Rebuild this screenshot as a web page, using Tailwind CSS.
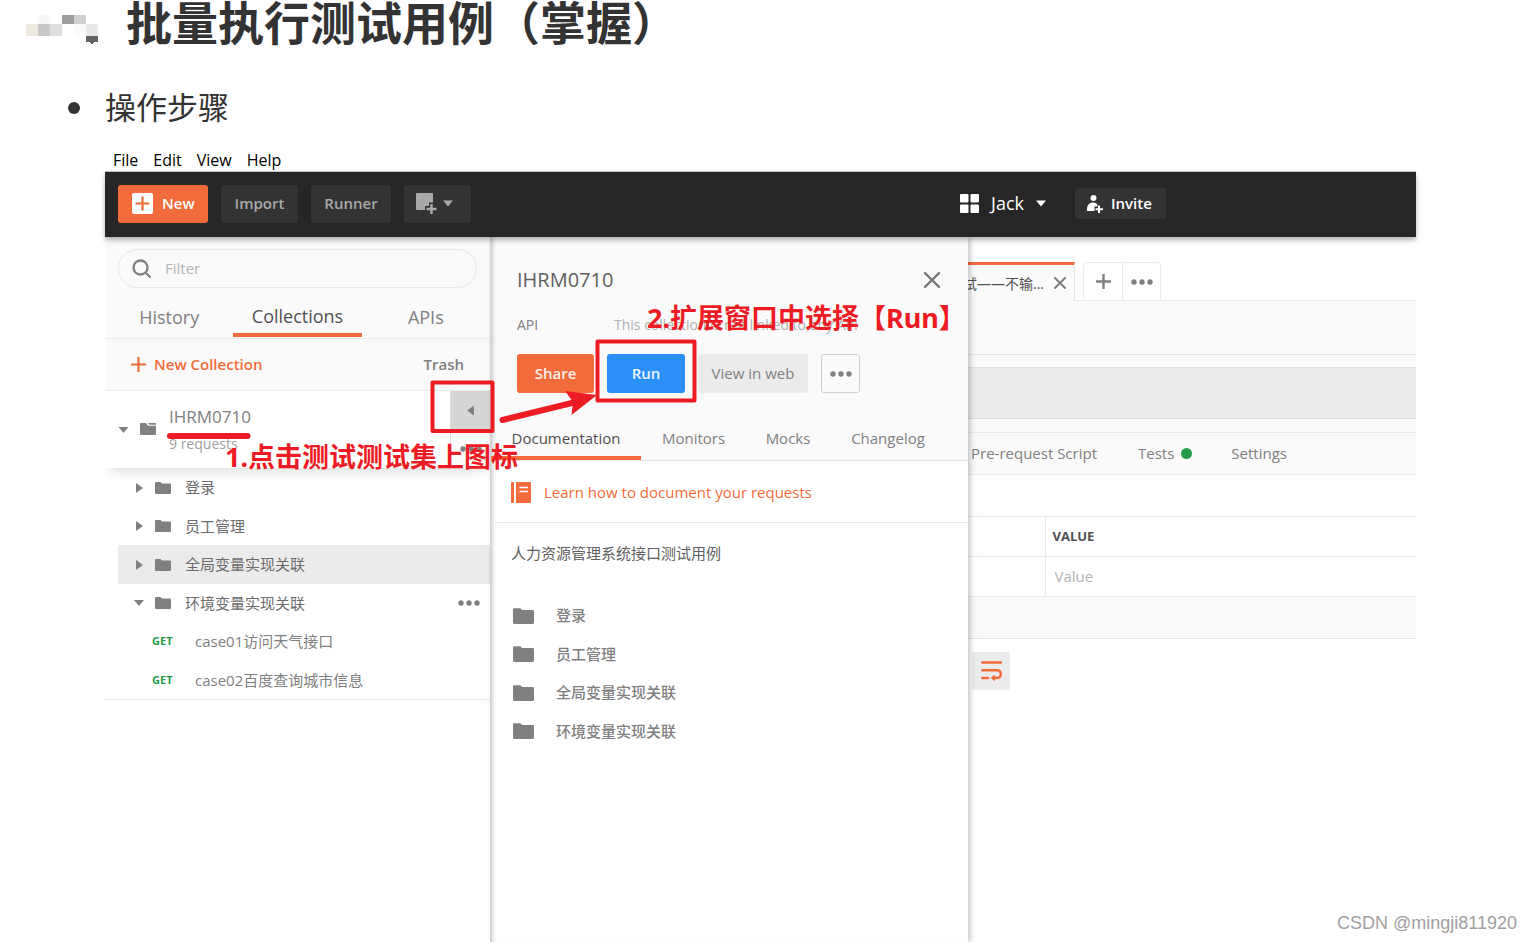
<!DOCTYPE html>
<html lang="zh-CN">
<head>
<meta charset="utf-8">
<title>批量执行测试用例（掌握）</title>
<script src="https://cdn.jsdelivr.net/npm/@tailwindcss/browser@4"></script>
</head>
<body class="bg-white font-['Open_Sans','Noto_Sans_CJK_SC',sans-serif] text-[15px] text-[#808080]">
<svg class="hidden">
  <symbol id="folder" viewBox="0 0 16 12"><path d="M0 1Q0 0 1 0H5.500L7 1.500H15Q16 1.500 16 2.500V11Q16 12 15 12H1Q0 12 0 11Z" fill="#808080"/></symbol>
  <symbol id="right" viewBox="0 0 7 10"><path d="M0 0L7 5L0 10Z" fill="#808080"/></symbol>
  <symbol id="down" viewBox="0 0 10 6"><path d="M0 0H10L5 6Z" fill="currentColor"/></symbol>
  <symbol id="dots" viewBox="0 0 22 6"><g fill="#808080"><circle cx="3" cy="3" r="2.700"/><circle cx="11" cy="3" r="2.700"/><circle cx="19" cy="3" r="2.700"/></g></symbol>
</svg>
<div class="relative flex h-screen flex-col overflow-hidden">
  <header class="flex h-12 shrink-0 items-start pl-[26px]">
    <svg class="h-12 w-[100px] shrink-0" viewBox="26 0 100 48" shape-rendering="crispEdges">
      <rect x="38" y="15" width="12" height="9" fill="#f8f8f8"/><rect x="62" y="15" width="12" height="9" fill="#9d9d9d"/><rect x="74" y="15" width="12" height="9" fill="#d0d0d2"/>
      <rect x="26" y="24" width="12" height="12" fill="#ede8e0"/><rect x="38" y="24" width="12" height="12" fill="#c8c8ca"/><rect x="50" y="24" width="12" height="12" fill="#dfdfdf"/><rect x="74" y="24" width="12" height="12" fill="#fafafa"/><rect x="86" y="24" width="12" height="12" fill="#e8e9eb"/>
      <path d="M86 36H98V42H94L92 45L89 42H86Z" fill="#646567"/>
    </svg>
    <h1 class="font-['Noto_Sans_CJK_SC',sans-serif] text-[46px] leading-10 font-bold whitespace-nowrap text-[#333]">批量执行测试用例（掌握）</h1>
  </header>
  <ul class="mt-10 shrink-0">
    <li class="flex h-10 items-center gap-[25px] pl-[68px] font-['Noto_Sans_CJK_SC',sans-serif] text-[31px] leading-9 text-[#333]"><span class="size-3 rounded-full bg-[#333]"></span><span class="self-start">操作步骤</span></li>
  </ul>

  <section class="relative mt-5 mr-[115px] ml-[105px] flex min-h-0 flex-1 flex-col">
    <nav class="flex h-6 shrink-0 items-center gap-[15px] border-b border-[#c4c8c8] pl-2 text-[16px] text-black">
      <button>File</button><button>Edit</button><button>View</button><button>Help</button>
    </nav>

    <div class="relative z-20 flex h-[65px] shrink-0 items-center justify-between bg-[#262626] pb-0.5 pl-[13px] font-semibold shadow-[0_3px_5px_rgba(0,0,0,0.3)]">
      <div class="flex gap-[13px]">
        <button class="flex h-[38px] w-[90px] items-center gap-[9px] rounded-[3px] bg-[#f26b3a] pl-[14px] text-white">
          <svg class="size-[21px]" viewBox="0 0 21 21"><rect width="21" height="21" rx="2" fill="#fff"/><path d="M10.500 3.500V17.500M3.500 10.500H17.500" stroke="#f26b3a" stroke-width="2.200"/></svg>New</button>
        <button class="h-[38px] w-[77px] rounded-[3px] bg-[#333] text-[#a9a9a9]">Import</button>
        <button class="h-[38px] w-20 rounded-[3px] bg-[#333] text-[#a9a9a9]">Runner</button>
        <button class="flex h-[38px] w-[67px] items-center gap-[6px] rounded-[3px] bg-[#333] pl-3 text-[#a9a9a9]" aria-label="New window">
          <svg class="size-[21px]" viewBox="0 0 21 21"><path d="M1 0H16Q17 0 17 1V9.500H13V13H9V17H1Q0 17 0 16V1Q0 0 1 0Z" fill="#a9a9a9"/><path d="M15.500 11V21M10.500 16H20.500" stroke="#a9a9a9" stroke-width="2.400"/></svg>
          <svg class="h-[7px] w-[10px]"><use href="#down"/></svg></button>
      </div>
      <div class="mr-[250px] flex items-center">
        <svg class="mr-3 size-[19px]" viewBox="0 0 19 19" fill="#fff"><rect width="8.500" height="8.500" rx="1"/><rect x="10.500" width="8.500" height="8.500" rx="1"/><rect y="10.500" width="8.500" height="8.500" rx="1"/><rect x="10.500" y="10.500" width="8.500" height="8.500" rx="1"/></svg>
        <button class="flex items-center gap-3 text-[18px] font-normal text-white">Jack<svg class="h-[7px] w-[10px]"><use href="#down"/></svg></button>
        <button class="ml-[29px] flex h-[31px] w-[91px] items-center gap-[7px] rounded-[3px] bg-[#333] pl-3 text-white">
          <svg class="h-[18px] w-[17px] shrink-0" viewBox="0 0 17 18"><circle cx="6.500" cy="3" r="3" fill="#fff"/><path d="M0 16V13Q1 7.500 6 7.500Q9.500 7.500 10.500 10V11.500H7.500V16Z" fill="#fff"/><path d="M12 10.500V18M8.500 14.200H16" stroke="#fff" stroke-width="2"/></svg>Invite</button>
      </div>
    </div>

    <div class="flex min-h-0 flex-1">
      <aside class="w-[386px] shrink-0 overflow-hidden border-r border-[#ddd] bg-white">
        <div class="bg-[#fafafa] pt-3">
          <label class="mx-[13px] flex h-[39px] items-center gap-[13px] rounded-full border border-[#e8e8e8] pl-[13px]">
            <svg class="size-5 shrink-0" viewBox="0 0 20 20" fill="none" stroke="#808080" stroke-width="2.300"><circle cx="8.500" cy="8.500" r="7"/><path d="M13.500 13.500L18.500 18.500"/></svg>
            <input type="text" placeholder="Filter" aria-label="Filter" class="w-full min-w-0 outline-none placeholder:text-[#b4b4b4]">
          </label>
          <div class="grid h-[51px] grid-cols-3 border-b border-[#eaeaea] text-[18px]">
            <button class="pt-2">History</button>
            <button class="mb-px border-b-4 border-[#f26b3a] pt-3 text-[#505050]">Collections</button>
            <button class="pt-2">APIs</button>
          </div>
          <div class="flex h-[52px] items-center justify-between border-b border-[#eaeaea] pr-[26px] pl-[26px] font-semibold">
            <button class="flex items-center gap-2 text-[#f26b3a]"><svg class="size-[15px]" viewBox="0 0 15 15"><path d="M7.500 0V15M0 7.500H15" stroke="#f26b3a" stroke-width="2.200"/></svg>New Collection</button>
            <button>Trash</button>
          </div>
        </div>
        <div class="relative flex h-[77px] shadow-[0_6px_12px_-4px_rgba(0,0,0,0.16)]">
          <svg class="mt-[36px] ml-[13px] h-[6px] w-[11px]"><use href="#down"/></svg>
          <svg class="mt-8 ml-[11px] h-3 w-4" viewBox="0 0 16 12"><path d="M0 1Q0 0 1 0H6L8 2.800H16V11Q16 12 15 12H1Q0 12 0 11Z" fill="#808080"/><path d="M8 0H15Q16 0 16 1V1.800H9.300Z" fill="#808080"/></svg>
          <div class="ml-[13px] pt-[14px]"><div class="text-[17px] leading-6">IHRM0710</div><div class="pt-1 text-[14px] leading-[22px] text-[#a0a0a0]">9 requests</div></div>
          <div class="ml-auto flex w-10 flex-col border-l border-[#ddd]">
            <button class="flex h-[38px] items-center justify-center bg-[#d6d6d6]" aria-label="Collapse"><svg class="h-[11px] w-[7px] rotate-180"><use href="#right"/></svg></button>
            <button class="flex h-[39px] items-center justify-center bg-[#fafafa]" aria-label="More"><svg class="h-[6px] w-[22px]"><use href="#dots"/></svg></button>
          </div>
        </div>
        <ul class="border-b border-[#eaeaea] text-[#6b6b6b]">
          <li class="flex h-[39px] items-center pl-[31px]"><svg class="h-[10px] w-[7px]"><use href="#right"/></svg><svg class="ml-3 h-3 w-4"><use href="#folder"/></svg><span class="ml-[14px]">登录</span></li>
          <li class="flex h-[38px] items-center pl-[31px]"><svg class="h-[10px] w-[7px]"><use href="#right"/></svg><svg class="ml-3 h-3 w-4"><use href="#folder"/></svg><span class="ml-[14px]">员工管理</span></li>
          <li class="ml-[13px] flex h-[39px] items-center bg-[#ebebeb] pl-[18px]"><svg class="h-[10px] w-[7px]"><use href="#right"/></svg><svg class="ml-3 h-3 w-4"><use href="#folder"/></svg><span class="ml-[14px]">全局变量实现关联</span></li>
          <li class="flex h-[38px] items-center pr-[10px] pl-[29px]"><svg class="h-[6px] w-[10px] text-[#808080]"><use href="#down"/></svg><svg class="ml-[11px] h-3 w-4"><use href="#folder"/></svg><span class="ml-[14px]">环境变量实现关联</span><button class="ml-auto" aria-label="More"><svg class="h-[6px] w-[22px]"><use href="#dots"/></svg></button></li>
          <li class="flex h-[39px] items-center pl-[47px] text-[#808080]"><b class="w-[43px] text-[11px] text-[#259b4a]">GET</b>case01访问天气接口</li>
          <li class="flex h-[38px] items-center pl-[47px] text-[#808080]"><b class="w-[43px] text-[11px] text-[#259b4a]">GET</b>case02百度查询城市信息</li>
        </ul>
      </aside>

      <article class="relative z-10 w-[477px] shrink-0 bg-white shadow-[2px_0_6px_rgba(0,0,0,0.25),inset_5px_0_5px_-4px_rgba(0,0,0,0.25)]">
        <div class="h-[224px] border-b border-[#e4e4e4] bg-[#fafafa] pt-[26px] shadow-[inset_5px_0_5px_-4px_rgba(0,0,0,0.25)]">
          <div class="flex h-[34px] items-center justify-between pr-7 pl-[26px]"><h2 class="text-[20px] text-[#606060]">IHRM0710</h2>
            <button aria-label="Close"><svg class="size-4" viewBox="0 0 16 16"><path d="M1 1L15 15M15 1L1 15" stroke="#757575" stroke-width="2.400" stroke-linecap="round"/></svg></button></div>
          <div class="flex h-[57px] items-center pb-0.5 pl-[26px] text-[14px]"><span class="w-[97px]">API</span><span class="text-[#b0b0b0]">This collection is not linked to any API</span></div>
          <div class="flex gap-[13px] pl-[26px]">
            <button class="h-[39px] w-[77px] rounded-[3px] bg-[#f26b3a] font-semibold text-white/90">Share</button>
            <button class="h-[39px] w-[78px] rounded-[3px] bg-[#2a8ff7] font-semibold text-white/90">Run</button>
            <button class="h-[39px] w-[110px] rounded-[3px] bg-[#ebebeb]">View in web</button>
            <button class="flex h-[39px] w-[39px] items-center justify-center rounded-[3px] border border-[#cfcfcf]" aria-label="More"><svg class="h-[6px] w-[22px]"><use href="#dots"/></svg></button>
          </div>
          <div class="flex h-[67px] items-end">
            <button class="h-10 w-[150px] border-b-4 border-[#f26b3a] text-[#505050]">Documentation</button>
            <button class="h-10 w-[105px] pb-1">Monitors</button>
            <button class="h-10 w-[84px] pb-1">Mocks</button>
            <button class="h-10 w-[116px] pb-1">Changelog</button>
          </div>
        </div>
        <a href="#" class="flex h-[62px] items-center gap-[13px] border-b border-[#e8e8e8] pt-0.5 pl-5 text-[#f26b3a]"><svg class="h-[21px] w-5" viewBox="0 0 20 21" fill="#f26b3a"><rect width="3" height="21" rx="1"/><path d="M5 0H19Q20 0 20 1V20Q20 21 19 21H5Z"/><path d="M8.500 5.500H17M8.500 9.500H17" stroke="#fff" stroke-width="1.300"/></svg>Learn how to document your requests</a>
        <p class="flex h-[60px] items-center pl-5 text-[#606060]">人力资源管理系统接口测试用例</p>
        <ul class="pt-[13px] font-medium">
          <li class="flex h-[39px] items-center gap-[22px] pl-[22px]"><svg class="h-4 w-[21px]"><use href="#folder"/></svg>登录</li>
          <li class="flex h-[38px] items-center gap-[22px] pl-[22px]"><svg class="h-4 w-[21px]"><use href="#folder"/></svg>员工管理</li>
          <li class="flex h-[39px] items-center gap-[22px] pl-[22px]"><svg class="h-4 w-[21px]"><use href="#folder"/></svg>全局变量实现关联</li>
          <li class="flex h-[38px] items-center gap-[22px] pl-[22px]"><svg class="h-4 w-[21px]"><use href="#folder"/></svg>环境变量实现关联</li>
        </ul>
      </article>

      <main class="min-w-0 flex-1 bg-white">
        <div class="flex h-[64px] items-stretch bg-white pt-[25px]">
          <div class="flex w-[107px] items-center justify-end gap-[10px] overflow-hidden border-t-[3px] border-r border-t-[#f26b3a] border-r-[#e4e4e4] bg-[#fafafa] pr-2 text-[14px] whitespace-nowrap text-[#505050]">试——不输...
            <button aria-label="Close tab"><svg class="size-3" viewBox="0 0 12 12"><path d="M0 0L12 12M12 0L0 12" stroke="#808080" stroke-width="2"/></svg></button></div>
          <div class="w-2 border-b border-[#eaeaea]"></div>
          <button class="flex w-10 items-center justify-center rounded-tl border border-[#eaeaea]" aria-label="New tab"><svg class="size-[15px]" viewBox="0 0 15 15"><path d="M7.500 0V15M0 7.500H15" stroke="#808080" stroke-width="2.400"/></svg></button>
          <button class="flex w-[38px] items-center justify-center rounded-tr border-y border-r border-[#eaeaea]" aria-label="Tab options"><svg class="h-[6px] w-[22px]"><use href="#dots"/></svg></button>
          <div class="flex-1 border-b border-[#eaeaea]"></div>
        </div>
        <div class="h-[54px] border-b border-[#e6e6e6] bg-[#fafafa]"></div>
        <div class="h-3 bg-[#fafafa]"></div>
        <div class="h-[52px] border-y border-[#dcdcdc] bg-[#ebebeb]"></div>
        <div class="h-[14px] border-b border-[#eaeaea] bg-[#fafafa]"></div>
        <div class="flex h-[42px] items-center border-b border-[#eaeaea] bg-[#fafafa] pl-[3px]">
          <button>Pre-request Script</button>
          <button class="ml-[41px] flex items-center gap-[7px]">Tests<span class="size-[11px] rounded-full bg-[#259b4a]"></span></button>
          <button class="ml-[39px]">Settings</button>
        </div>
        <table class="mt-[41px] w-full table-fixed border-collapse text-left">
          <thead><tr class="h-10 border-y border-[#eaeaea]"><th class="w-[77px] border-r border-[#eaeaea]"></th><th class="pl-[7px] text-[13px] font-bold text-[#505050]">VALUE</th></tr></thead>
          <tbody><tr class="h-10 border-b border-[#eaeaea]"><td class="border-r border-[#eaeaea]"></td><td class="pl-[9px]"><input type="text" aria-label="Value" placeholder="Value" class="w-full outline-none placeholder:text-[#b4b4b4]"></td></tr></tbody>
        </table>
        <div class="h-[42px] border-b border-[#e6e6e6] bg-[#fafafa]"></div>
        <button class="mt-[13px] ml-1 flex size-[38px] items-center justify-center rounded-[3px] bg-[#ebebeb]" aria-label="Wrap lines"><svg class="h-5 w-[21px]" viewBox="0 0 21 20" fill="none" stroke="#f26b3a" stroke-width="2.400" stroke-linecap="round"><path d="M1.200 1.500H19.800M1.200 9.300H16.500Q19.800 9.500 19.800 13Q19.800 17 16 17H12M1.200 17H7"/><path d="M13 14.500L10.500 17L13 19.300Z" fill="#f26b3a" stroke-width="1"/></svg></button>
      </main>
    </div>

    <!-- Red step annotations -->
    <div class="pointer-events-none absolute inset-0 z-30 overflow-hidden font-['Noto_Sans','Noto_Sans_CJK_SC',sans-serif] text-[27px] leading-9 font-bold whitespace-nowrap text-[#ed1c24]">
      <svg class="absolute top-0 left-0 h-[340px] w-[620px]" viewBox="105 148 620 340" fill="none" stroke="#ed1c24">
        <rect x="432.500" y="382.500" width="60" height="48.500" stroke-width="4" stroke-linejoin="round"/>
        <rect x="597.500" y="341.500" width="97" height="59" stroke-width="4" stroke-linejoin="round"/>
        <path d="M170 436H247.500" stroke-width="6" stroke-linecap="round"/>
        <path d="M502.500 420L576 402" stroke-width="6" stroke-linecap="round"/>
        <path d="M597 395L565 391L573 402L571.500 415Z" fill="#ed1c24" stroke="none"/>
      </svg>
      <p class="absolute top-[291px] left-[120px]">1.点击测试测试集上图标</p>
      <p class="absolute top-[152px] left-[542px]">2.扩展窗口中选择【Run】</p>
    </div>
  </section>
  <p class="absolute right-[14px] bottom-2 z-40 font-['Liberation_Sans',sans-serif] text-[18px] leading-[22px] text-[#a0a0a0]">CSDN @mingji811920</p>
</div>
</body>
</html>
